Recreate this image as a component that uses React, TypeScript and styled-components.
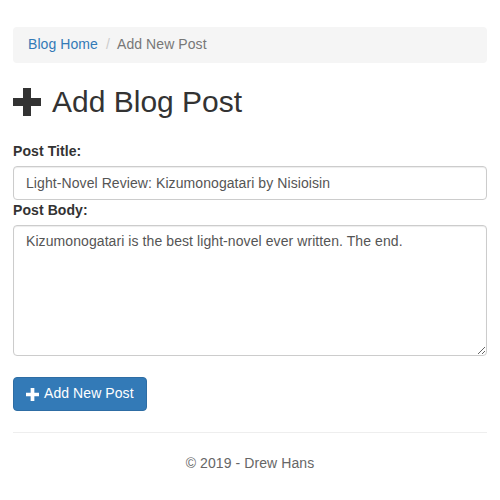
import React from "react";
import styled, { createGlobalStyle } from "styled-components";

const Global = createGlobalStyle`
  html, body { margin: 0; padding: 0; background: #fff; }
  body {
    font-family: "Liberation Sans", Arial, Helvetica, sans-serif;
    font-size: 14px;
    line-height: 1.42857;
    color: #333;
    letter-spacing: 0.08px;
  }
  * { box-sizing: border-box; }
`;

const Container = styled.div`
  padding: 27px 13px 0;
  display: flex;
  flex-direction: column;
`;

const Breadcrumb = styled.ol`
  list-style: none;
  margin: 0;
  padding: 8px 15px;
  background: #f5f5f5;
  border-radius: 4px;
  display: flex;
  align-items: center;
  height: 36px;
`;

const Crumb = styled.li<{ $active?: boolean }>`
  color: ${(p) => (p.$active ? "#777" : "#337ab7")};
`;

const Sep = styled.span`
  color: #ccc;
  padding: 0 7px 0 8px;
`;

const Heading = styled.h2`
  font-size: 30px;
  font-weight: 500;
  line-height: 33px;
  letter-spacing: 0;
  margin: 22px 0 23px;
  display: flex;
  align-items: center;
  gap: 11px;
`;

const Label = styled.label`
  display: block;
  font-weight: bold;
  line-height: 20px;
  margin-bottom: 5px;
`;

const Input = styled.input`
  display: block;
  width: 100%;
  height: 34px;
  padding: 6px 12px;
  font: inherit;
  letter-spacing: inherit;
  color: #555;
  border: 1px solid #ccc;
  border-radius: 4px;
  box-shadow: inset 0 1px 1px rgba(0,0,0,.075);
  background: #fff;
`;

const TextArea = styled.textarea`
  display: block;
  width: 100%;
  height: 131px;
  padding: 6px 12px;
  font: inherit;
  letter-spacing: inherit;
  color: #555;
  border: 1px solid #ccc;
  border-radius: 4px;
  box-shadow: inset 0 1px 1px rgba(0,0,0,.075);
  resize: vertical;
  background: #fff;
`;

const Button = styled.button`
  align-self: flex-start;
  margin-top: 21px;
  height: 34px;
  padding: 6px 12px;
  font: inherit;
  letter-spacing: inherit;
  color: #fff;
  background: #337ab7;
  border: 1px solid #2e6da4;
  border-radius: 4px;
  display: flex;
  align-items: center;
  gap: 5px;
`;

const Rule = styled.hr`
  margin: 21px 0 20px;
  border: 0;
  border-top: 1px solid #eee;
  width: 100%;
`;

const Footer = styled.footer`
  text-align: center;
  color: #666;
  line-height: 20px;
`;

const Plus = ({ size, color }: { size: number; color: string }) => (
  <svg width={size} height={size} viewBox="0 0 28 28" aria-hidden>
    <path d="M10 0h8v10h10v8H18v10h-8V18H0v-8h10z" fill={color} />
  </svg>
);

export default function App() {
  return (
    <>
      <Global />
      <Container>
        <Breadcrumb>
          <Crumb>Blog Home</Crumb>
          <Sep>/</Sep>
          <Crumb $active>Add New Post</Crumb>
        </Breadcrumb>
        <Heading>
          <Plus size={28} color="#333" />
          Add Blog Post
        </Heading>
        <Label>Post Title:</Label>
        <Input defaultValue="Light-Novel Review: Kizumonogatari by Nisioisin" />
        <Label>Post Body:</Label>
        <TextArea defaultValue="Kizumonogatari is the best light-novel ever written. The end." />
        <Button>
          <Plus size={13} color="#fff" />
          Add New Post
        </Button>
        <Rule />
        <Footer>© 2019 - Drew Hans</Footer>
      </Container>
    </>
  );
}
